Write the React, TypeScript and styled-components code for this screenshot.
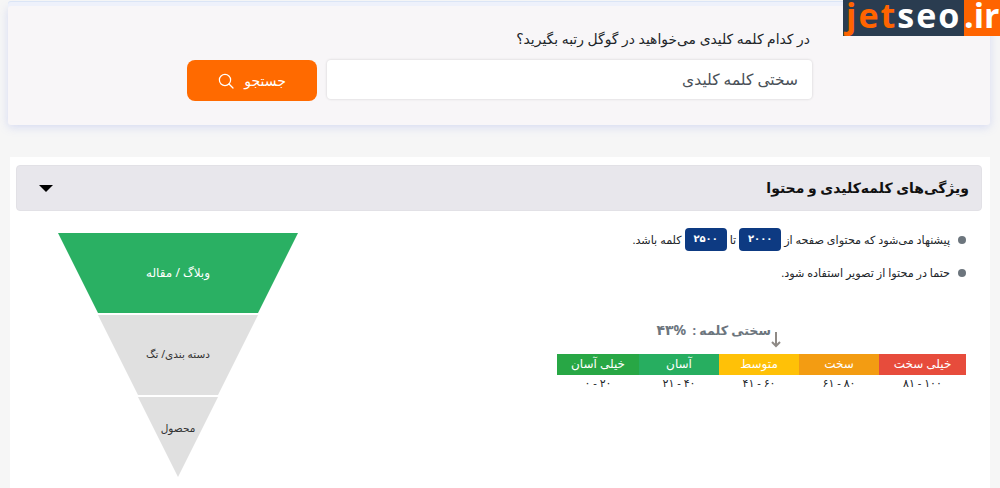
import React from 'react'
import styled, { createGlobalStyle } from 'styled-components'

const GlobalStyle = createGlobalStyle`
  html, body {
    margin: 0;
    padding: 0;
    background: #f6f6f6;
  }
  body {
    font-family: 'Noto Sans', 'DejaVu Sans', sans-serif;
    color: #212529;
    overflow: hidden;
  }
  * { box-sizing: border-box; }
`

const Page = styled.div`
  position: relative;
  width: 1000px;
  height: 488px;
  overflow: hidden;
  padding: 6px 10px 0 8px;
`

const Logo = styled.div`
  position: absolute;
  top: 0;
  right: 0;
  display: flex;
  height: 36px;
  font-family: 'Open Sans', sans-serif;
  font-weight: 700;
  font-size: 34px;
  line-height: 30px;
`

const LogoDark = styled.div`
  width: 121px;
  background: #2a3c50;
  padding-left: 3px;
  color: #fff;
  letter-spacing: 2px;
  white-space: nowrap;
`

const LogoOrange = styled.span`
  color: #ff6400;
`

const LogoEnd = styled.div`
  width: 36px;
  background: #ff6400;
  color: #fff;
  white-space: nowrap;
`

const SearchPanel = styled.section`
  height: 119px;
  padding-top: 23px;
  background: #f8f6f8;
  border-radius: 3px;
  box-shadow: 0 -4px 0 #eef1fb, 0 -5px 0 #dbe5f6, 0 2px 10px rgba(125, 145, 230, 0.28);
  direction: rtl;
`

const SearchLabel = styled.div`
  font-size: 13.9px;
  line-height: 20px;
  padding-right: 180px;
  color: #212529;
`

const SearchRow = styled.div`
  display: flex;
  gap: 10px;
  margin-top: 11px;
  padding-right: 178px;
`

const SearchInput = styled.div`
  width: 485px;
  height: 39px;
  padding: 0 14px;
  background: #fff;
  border-radius: 4px;
  box-shadow: 0 0 2px 1px rgba(0, 0, 0, 0.08);
  font-size: 15.5px;
  line-height: 39px;
  color: #495057;
`

const SearchButton = styled.button`
  display: flex;
  align-items: center;
  justify-content: center;
  gap: 10px;
  width: 130px;
  height: 41px;
  border: 0;
  border-radius: 8px;
  background: #ff6a00;
  color: #fff;
  font-family: inherit;
  font-size: 14px;
`

const Card = styled.section`
  margin: 32px 0 0 2px;
  height: 340px;
  padding: 8px 8px 0 6px;
  background: #fff;
`

const Header = styled.div`
  display: flex;
  align-items: center;
  justify-content: space-between;
  height: 46px;
  padding: 0 12px 0 22px;
  background: #e8e7ec;
  border: 1px solid #e2e1e6;
  border-radius: 4px;
`

const Title = styled.h2`
  margin: 0 0 2px;
  direction: rtl;
  font-size: 14px;
  font-weight: 700;
  color: #111;
`

const Caret = styled.span`
  width: 0;
  height: 0;
  border-left: 7px solid transparent;
  border-right: 7px solid transparent;
  border-top: 7px solid #000;
`

const Body = styled.div`
  display: flex;
  justify-content: space-between;
  padding: 17px 16px 0 42px;
`

const Funnel = styled.div`
  display: flex;
  flex-direction: column;
  align-items: center;
  gap: 2px;
  width: 240px;
  margin-top: 5px;
`

const Slice = styled.div<{ $top: number; $bottom: number; $lift: number; $active?: boolean }>`
  display: flex;
  align-items: center;
  justify-content: center;
  width: ${p => p.$top}px;
  height: 80px;
  padding-bottom: ${p => p.$lift}px;
  direction: rtl;
  font-size: ${p => (p.$active ? 12 : 10.5)}px;
  color: ${p => (p.$active ? '#fff' : '#333')};
  background: ${p => (p.$active ? '#2ab063' : '#e0e0e0')};
  clip-path: polygon(
    0 0,
    100% 0,
    ${p => (p.$top + p.$bottom) / 2}px 100%,
    ${p => (p.$top - p.$bottom) / 2}px 100%
  );
`

const Info = styled.div`
  width: 410px;
  direction: rtl;
`

const Tips = styled.ul`
  margin: 0;
  padding: 0;
  list-style: none;
`

const Tip = styled.li`
  position: relative;
  display: flex;
  align-items: center;
  gap: 3px;
  height: 23px;
  margin-bottom: 10px;
  padding-right: 16px;
  font-size: 11.2px;
  white-space: nowrap;
  &::before {
    content: '';
    position: absolute;
    right: 0;
    top: 8px;
    width: 8px;
    height: 8px;
    border-radius: 50%;
    background: #6c757d;
  }
`

const WordCount = styled.span`
  display: inline-block;
  width: 42px;
  height: 23px;
  background: #0d3a82;
  border-radius: 4px;
  color: #fff;
  font-size: 10px;
  font-weight: 700;
  line-height: 21px;
  text-align: center;
`

const Meter = styled.div`
  margin-top: 36px;
`

const MeterLabel = styled.div`
  position: relative;
  padding-right: 195px;
  height: 20px;
  font-size: 12.7px;
  font-weight: 700;
  line-height: 20px;
  color: #6c757d;
  white-space: nowrap;
`

const Percent = styled.bdi`
  direction: ltr;
  font-size: 14px;
  margin-right: 3px;
`

const Arrow = styled.svg`
  position: absolute;
  right: 185px;
  top: 11px;
`

const Scale = styled.div`
  display: grid;
  grid-template-columns: 87px 80px 80px 80px 82px;
  margin-top: 14px;
`

const Band = styled.div<{ $color: string }>`
  height: 21px;
  background: ${p => p.$color};
  color: #fff;
  font-size: 12px;
  line-height: 20px;
  text-align: center;
  white-space: nowrap;
`

const Range = styled.div`
  direction: ltr;
  font-size: 11px;
  line-height: 15px;
  text-align: center;
  color: #212529;
`

const bands = [
  { name: 'خیلی سخت', range: '۸۱ - ۱۰۰', color: '#e74c3c' },
  { name: 'سخت', range: '۶۱ - ۸۰', color: '#f39c12' },
  { name: 'متوسط', range: '۴۱ - ۶۰', color: '#ffc107' },
  { name: 'آسان', range: '۲۱ - ۴۰', color: '#27ae60' },
  { name: 'خیلی آسان', range: '۰ - ۲۰', color: '#28a745' },
]

export default function App() {
  return (
    <Page>
      <GlobalStyle />
      <Logo>
        <LogoDark>
          <LogoOrange>jet</LogoOrange>seo
        </LogoDark>
        <LogoEnd>.ir</LogoEnd>
      </Logo>

      <SearchPanel>
        <SearchLabel>در کدام کلمه کلیدی می‌خواهید در گوگل رتبه بگیرید؟</SearchLabel>
        <SearchRow>
          <SearchInput>سختی کلمه کلیدی</SearchInput>
          <SearchButton>
            جستجو
            <svg width="16" height="16" viewBox="0 0 16 16" fill="none" stroke="#fff" strokeWidth="1.2">
              <circle cx="7" cy="7" r="5.6" />
              <path d="M11 11l4 4" strokeLinecap="round" />
            </svg>
          </SearchButton>
        </SearchRow>
      </SearchPanel>

      <Card>
        <Header>
          <Caret />
          <Title>ویژگی‌های کلمه‌کلیدی و محتوا</Title>
        </Header>
        <Body>
          <Funnel>
            <Slice $top={240} $bottom={160} $lift={2} $active>وبلاگ / مقاله</Slice>
            <Slice $top={160} $bottom={80} $lift={2}>دسته بندی/ تگ</Slice>
            <Slice $top={80} $bottom={0} $lift={18}>محصول</Slice>
          </Funnel>
          <Info>
            <Tips>
              <Tip>
                <span>پیشنهاد می‌شود که محتوای صفحه از</span>
                <WordCount>۲۰۰۰</WordCount>
                <span>تا</span>
                <WordCount>۲۵۰۰</WordCount>
                <span>کلمه باشد.</span>
              </Tip>
              <Tip>حتما در محتوا از تصویر استفاده شود.</Tip>
            </Tips>
            <Meter>
              <MeterLabel>
                سختی کلمه : <Percent>۴۳%</Percent>
                <Arrow width="10" height="17" viewBox="0 0 10 17" fill="none" stroke="#8f8a86" strokeWidth="2">
                  <path d="M5 1v14M1 11l4 4 4-4" />
                </Arrow>
              </MeterLabel>
              <Scale>
                {bands.map(b => (
                  <Band key={b.name} $color={b.color}>{b.name}</Band>
                ))}
                {bands.map(b => (
                  <Range key={b.range}>{b.range}</Range>
                ))}
              </Scale>
            </Meter>
          </Info>
        </Body>
      </Card>
    </Page>
  )
}
